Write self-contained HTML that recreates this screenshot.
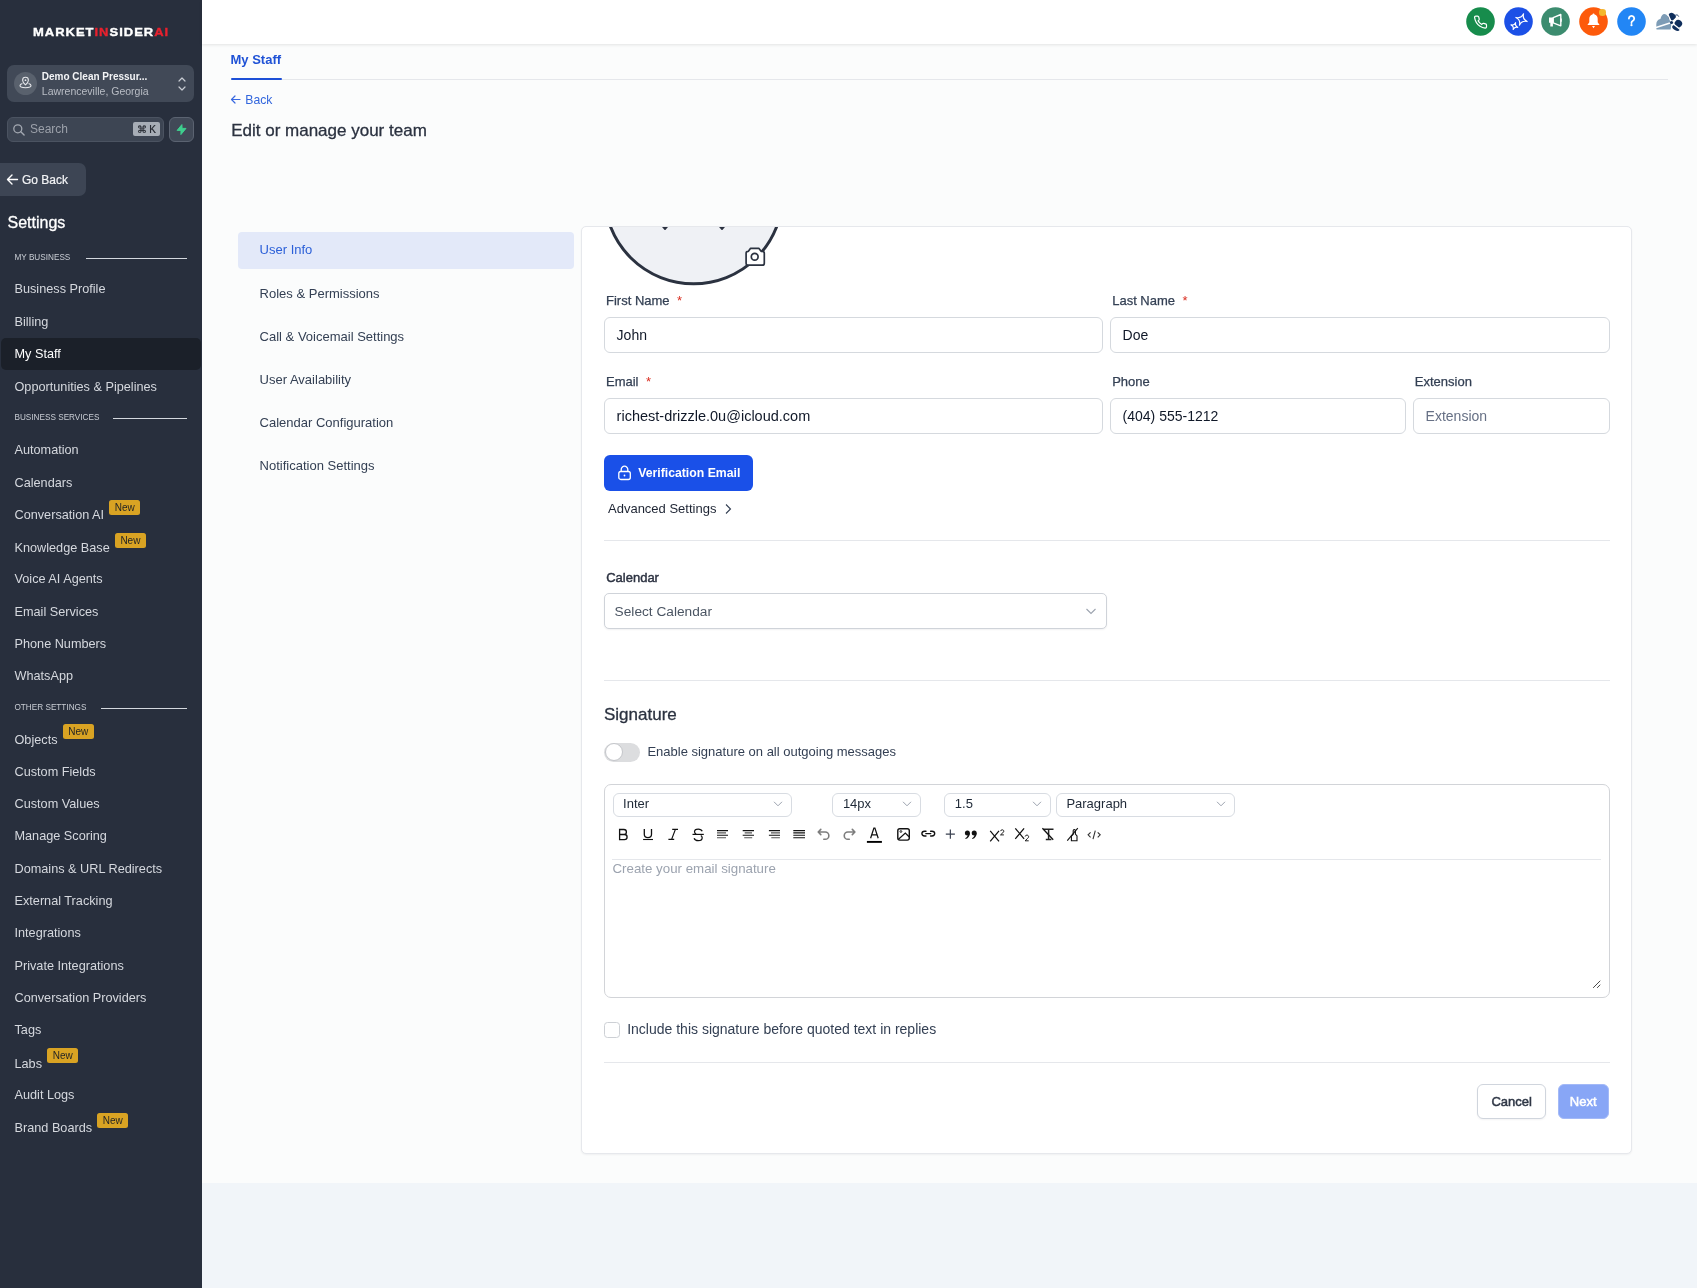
<!DOCTYPE html>
<html><head><meta charset="utf-8"><style>
html,body{will-change:transform;margin:0;padding:0;width:1697px;height:1288px;overflow:hidden;background:#f9fafb;font-family:"Liberation Sans",sans-serif}
.r{position:absolute}
.t{position:absolute;white-space:nowrap;font-family:"Liberation Sans",sans-serif}
.badge{display:inline-block;position:relative;top:-8.5px;margin-left:5px;width:31.3px;height:15px;line-height:15px;font-size:10px;text-align:center;background:#d9a323;color:#252525;border-radius:2.5px;vertical-align:baseline}
</style></head><body>
<div class="r" style="left:0px;top:0px;width:202px;height:1288px;background:#282f3d"></div>
<div class="t " style="left:33.2px;top:26.67px;font-size:10.9px;line-height:10.9px;color:#fff;font-weight:700;letter-spacing:0.85px;transform:scaleX(1.19);transform-origin:0 0;-webkit-text-stroke:0.35px;">MARKET<span style="color:#e8212e">IN</span>SIDER<span style="color:#e8212e">AI</span></div>
<div class="r" style="left:7px;top:65px;width:187px;height:37px;background:#414957;border-radius:7px"></div>
<div class="r" style="left:14px;top:72px;width:23px;height:23px;border-radius:50%;background:#59616d"></div>
<svg class="r" style="left:19px;top:76px;" width="13" height="13" viewBox="0 0 13 13"><path d="M6.5 1.3a2.9 2.9 0 0 0-2.9 2.9c0 2 2.9 4.6 2.9 4.6s2.9-2.6 2.9-4.6a2.9 2.9 0 0 0-2.9-2.9z" fill="none" stroke="#e5e7eb" stroke-width="1.1"/><circle cx="6.5" cy="4.2" r="0.9" fill="#e5e7eb"/><path d="M3.4 7.6C1.9 8.1 1 8.8 1 9.6c0 1.3 2.5 2.2 5.5 2.2s5.5-.9 5.5-2.2c0-.8-.9-1.5-2.4-2" fill="none" stroke="#e5e7eb" stroke-width="1.1"/></svg>
<div class="t " style="left:41.8px;top:71.73px;font-size:10px;line-height:10px;color:#f3f4f6;font-weight:700;">Demo Clean Pressur...</div>
<div class="t " style="left:41.8px;top:86.21px;font-size:10.5px;line-height:10.5px;color:#b9bdc5;">Lawrenceville, Georgia</div>
<svg class="r" style="left:176px;top:75px;" width="12" height="18" viewBox="0 0 12 18"><path d="M3 6l3-3 3 3M3 12l3 3 3-3" fill="none" stroke="#c8ccd3" stroke-width="1.2" stroke-linecap="round" stroke-linejoin="round"/></svg>
<div class="r" style="left:7px;top:117px;width:157px;height:25px;background:#3d4553;border:1px solid #4b5361;border-radius:6px;box-sizing:border-box"></div>
<svg class="r" style="left:12px;top:123px;" width="14" height="14" viewBox="0 0 14 14"><circle cx="5.8" cy="5.8" r="4" fill="none" stroke="#a3a8b1" stroke-width="1.3"/><path d="M8.8 8.8l3.3 3.3" stroke="#a3a8b1" stroke-width="1.4" stroke-linecap="round"/></svg>
<div class="t " style="left:30px;top:122.74px;font-size:12px;line-height:12px;color:#9ca1aa;">Search</div>
<div class="r" style="left:133px;top:122px;width:27px;height:14px;background:#a7adb6;border-radius:2px"></div>
<div class="t " style="left:136.5px;top:124.73px;font-size:10px;line-height:10px;color:#1e222a;-webkit-text-stroke:0.2px;">&#8984; K</div>
<div class="r" style="left:169px;top:117px;width:25px;height:25px;background:#414957;border:1px solid #5b6371;border-radius:6px;box-sizing:border-box"></div>
<svg class="r" style="left:175px;top:123px;" width="14" height="13" viewBox="0 0 14 13"><path d="M6.9 1.6L2.1 7.4H6L5.9 11.6 11 5.4H7.1z" fill="#3ecf8e" stroke="#3ecf8e" stroke-width="1" stroke-linejoin="round"/></svg>
<div class="r" style="left:0px;top:163px;width:86px;height:33px;background:#3d4554;border-radius:0 7px 7px 0"></div>
<svg class="r" style="left:6px;top:173px;" width="13" height="13" viewBox="0 0 13 13"><path d="M11.5 6.5H1.8M6 2L1.5 6.5 6 11" fill="none" stroke="#fff" stroke-width="1.4" stroke-linecap="round" stroke-linejoin="round"/></svg>
<div class="t " style="left:22px;top:173.64px;font-size:12px;line-height:12px;color:#f3f4f6;-webkit-text-stroke:0.2px;">Go Back</div>
<div class="t " style="left:7.5px;top:214.66px;font-size:16px;line-height:16px;color:#ffffff;-webkit-text-stroke:0.3px;">Settings</div>
<div class="t " style="left:14.5px;top:253.96px;font-size:8.2px;line-height:8.2px;color:#c9cdd4;">MY BUSINESS</div>
<div class="r" style="left:86px;top:257.7px;width:101px;height:1.5px;background:#d4d8de"></div>
<div class="t " style="left:14.5px;top:283.35px;font-size:12.7px;line-height:12.7px;color:#d5d8de;">Business Profile</div>
<div class="t " style="left:14.5px;top:315.85px;font-size:12.7px;line-height:12.7px;color:#d5d8de;">Billing</div>
<div class="r" style="left:1px;top:338px;width:200px;height:31.5px;background:#1b2029;border-radius:5px"></div>
<div class="t " style="left:14.5px;top:348.35px;font-size:12.7px;line-height:12.7px;color:#ffffff;">My Staff</div>
<div class="t " style="left:14.5px;top:380.85px;font-size:12.7px;line-height:12.7px;color:#d5d8de;">Opportunities & Pipelines</div>
<div class="t " style="left:14.5px;top:413.96px;font-size:8.2px;line-height:8.2px;color:#c9cdd4;">BUSINESS SERVICES</div>
<div class="r" style="left:113px;top:417.7px;width:74px;height:1.5px;background:#d4d8de"></div>
<div class="t " style="left:14.5px;top:444.45px;font-size:12.7px;line-height:12.7px;color:#d5d8de;">Automation</div>
<div class="t " style="left:14.5px;top:476.75px;font-size:12.7px;line-height:12.7px;color:#d5d8de;">Calendars</div>
<div class="t " style="left:14.5px;top:508.45px;font-size:12.7px;line-height:12.7px;color:#d5d8de;">Conversation AI<span class="badge">New</span></div>
<div class="t " style="left:14.5px;top:541.05px;font-size:12.7px;line-height:12.7px;color:#d5d8de;">Knowledge Base<span class="badge">New</span></div>
<div class="t " style="left:14.5px;top:573.35px;font-size:12.7px;line-height:12.7px;color:#d5d8de;">Voice AI Agents</div>
<div class="t " style="left:14.5px;top:605.65px;font-size:12.7px;line-height:12.7px;color:#d5d8de;">Email Services</div>
<div class="t " style="left:14.5px;top:638.05px;font-size:12.7px;line-height:12.7px;color:#d5d8de;">Phone Numbers</div>
<div class="t " style="left:14.5px;top:670.35px;font-size:12.7px;line-height:12.7px;color:#d5d8de;">WhatsApp</div>
<div class="t " style="left:14.5px;top:703.96px;font-size:8.2px;line-height:8.2px;color:#c9cdd4;">OTHER SETTINGS</div>
<div class="r" style="left:101px;top:707.7px;width:86px;height:1.5px;background:#d4d8de"></div>
<div class="t " style="left:14.5px;top:732.85px;font-size:12.7px;line-height:12.7px;color:#d5d8de;">Objects<span class="badge">New</span></div>
<div class="t " style="left:14.5px;top:765.65px;font-size:12.7px;line-height:12.7px;color:#d5d8de;">Custom Fields</div>
<div class="t " style="left:14.5px;top:797.95px;font-size:12.7px;line-height:12.7px;color:#d5d8de;">Custom Values</div>
<div class="t " style="left:14.5px;top:830.35px;font-size:12.7px;line-height:12.7px;color:#d5d8de;">Manage Scoring</div>
<div class="t " style="left:14.5px;top:862.65px;font-size:12.7px;line-height:12.7px;color:#d5d8de;">Domains & URL Redirects</div>
<div class="t " style="left:14.5px;top:895.05px;font-size:12.7px;line-height:12.7px;color:#d5d8de;">External Tracking</div>
<div class="t " style="left:14.5px;top:927.35px;font-size:12.7px;line-height:12.7px;color:#d5d8de;">Integrations</div>
<div class="t " style="left:14.5px;top:959.75px;font-size:12.7px;line-height:12.7px;color:#d5d8de;">Private Integrations</div>
<div class="t " style="left:14.5px;top:992.05px;font-size:12.7px;line-height:12.7px;color:#d5d8de;">Conversation Providers</div>
<div class="t " style="left:14.5px;top:1024.45px;font-size:12.7px;line-height:12.7px;color:#d5d8de;">Tags</div>
<div class="t " style="left:14.5px;top:1056.75px;font-size:12.7px;line-height:12.7px;color:#d5d8de;">Labs<span class="badge">New</span></div>
<div class="t " style="left:14.5px;top:1089.15px;font-size:12.7px;line-height:12.7px;color:#d5d8de;">Audit Logs</div>
<div class="t " style="left:14.5px;top:1121.45px;font-size:12.7px;line-height:12.7px;color:#d5d8de;">Brand Boards<span class="badge">New</span></div>
<div class="r" style="left:202px;top:0px;width:1495px;height:1183px;background:#fbfcfc"></div>
<div class="r" style="left:202px;top:1183px;width:1495px;height:105px;background:#f1f5f9"></div>
<div class="r" style="left:202px;top:0px;width:1495px;height:44px;background:#fff;box-shadow:0 1px 3px rgba(0,0,0,0.10)"></div>
<svg class="r" style="left:1466.0px;top:7px;" width="29" height="29" viewBox="0 0 29 29"><circle cx="14.5" cy="14.5" r="14.3" fill="#178c4c"/><path transform="translate(7.3,7.9) scale(0.6)" d="M22 16.92v3a2 2 0 0 1-2.18 2 19.79 19.79 0 0 1-8.63-3.07 19.5 19.5 0 0 1-6-6 19.79 19.79 0 0 1-3.07-8.67A2 2 0 0 1 4.11 2h3a2 2 0 0 1 2 1.72 12.84 12.84 0 0 0 .7 2.81 2 2 0 0 1-.45 2.11L8.09 9.91a16 16 0 0 0 6 6l1.27-1.27a2 2 0 0 1 2.11-.45 12.84 12.84 0 0 0 2.81.7A2 2 0 0 1 22 16.92z" fill="none" stroke="#fff" stroke-width="2"/></svg>
<svg class="r" style="left:1503.8px;top:7px;" width="29" height="29" viewBox="0 0 29 29"><circle cx="14.5" cy="14.5" r="14.3" fill="#1c50e6"/><path d="M19.55 6.86 Q18.19 12.18 23.14 14.55 Q17.82 13.19 15.45 18.14 Q16.81 12.82 11.86 10.45 Q17.18 11.81 19.55 6.86Z" fill="none" stroke="#fff" stroke-width="1.15" stroke-linejoin="round"/><path d="M11.63 15.72 Q10.82 18.91 13.78 20.33 Q10.59 19.52 9.17 22.48 Q9.98 19.29 7.02 17.87 Q10.21 18.68 11.63 15.72Z" fill="none" stroke="#fff" stroke-width="1.15" stroke-linejoin="round"/></svg>
<svg class="r" style="left:1541.3px;top:7px;" width="29" height="29" viewBox="0 0 29 29"><circle cx="14.5" cy="14.5" r="14.3" fill="#3c8c6f"/><path d="M8 10.6h4.2v5.2H8z M9.3 15.8h2.6v3.6H9.3z" fill="#fff"/><path d="M12.2 10.6l7.6-3.1v11.3l-7.6-3z" fill="none" stroke="#fff" stroke-width="1.4" stroke-linejoin="round"/><path d="M20.2 11.6v3.2" stroke="#fff" stroke-width="1.2"/></svg>
<svg class="r" style="left:1579.3px;top:7px;" width="29" height="29" viewBox="0 0 29 29"><circle cx="14.5" cy="14.5" r="14.3" fill="#fd5a0b"/><path d="M14.5 6.6c-.6 0-1 .4-1 .9-2 .5-3.2 2.2-3.2 4.3v3.4l-1.9 2.7h12.2l-1.9-2.7v-3.4c0-2.1-1.2-3.8-3.2-4.3 0-.5-.4-.9-1-.9z" fill="#fff"/><path d="M13 19h3l-1.5 2.2z" fill="#fff"/></svg>
<div class="r" style="left:1599px;top:9.1px;width:6.6px;height:6.6px;border-radius:50%;background:#f4b72c"></div>
<svg class="r" style="left:1617.1000000000001px;top:7px;" width="29" height="29" viewBox="0 0 29 29"><circle cx="14.5" cy="14.5" r="14.3" fill="#2286f5"/><path d="M11.9 11.5a2.65 2.65 0 1 1 4 2.3c-.8.5-1.4.9-1.4 1.9v.4" fill="none" stroke="#fff" stroke-width="1.8" stroke-linecap="round"/><circle cx="14.5" cy="18.2" r="1.1" fill="#fff"/></svg>
<svg class="r" style="left:1650px;top:5px;" width="40" height="30" viewBox="0 0 40 30"><path d="M6.3 24.3V19.2C6.3 16.2 8 14.2 10.4 13.9 11.3 11.1 12.7 9.1 14.4 9.1 16.6 9.1 19 12.4 21.5 17.5L20.7 24.6H7.2z" fill="#7d9cb6"/><g fill="#0f2e5c"><ellipse cx="21.9" cy="11.6" rx="4" ry="3.5" transform="rotate(35 21.9 11.6)"/><ellipse cx="28.4" cy="18.6" rx="3.8" ry="3.6" transform="rotate(40 28.4 18.6)"/><ellipse cx="26" cy="23" rx="4.1" ry="2.4" transform="rotate(30 26 23)"/></g><path d="M25.3 10.2c1.6-.6 2.9-.2 3.4 1.4" fill="none" stroke="#0f2e5c" stroke-width="0.9"/><path d="M21.5 17.5L16.6 6.5M21.5 17.5L4.5 23M21.5 17.5L28 11.5M21.5 17.5L31.5 25.5" stroke="#fff" stroke-width="1.4"/><circle cx="21.5" cy="17.5" r="1.6" fill="#0f2e5c"/></svg>
<div class="t " style="left:230.5px;top:53.20px;font-size:13px;line-height:13px;color:#1f52d6;font-weight:700;">My Staff</div>
<div class="r" style="left:231px;top:78.5px;width:1437px;height:1.0px;background:#e5e7eb"></div>
<div class="r" style="left:231px;top:77.5px;width:51px;height:2.5px;background:#1d4fd7;border-radius:1px"></div>
<svg class="r" style="left:230px;top:94px;" width="11" height="11" viewBox="0 0 11 11"><path d="M10 5.5H1.5M5 2L1.5 5.5 5 9" fill="none" stroke="#3868e0" stroke-width="1.2" stroke-linecap="round" stroke-linejoin="round"/></svg>
<div class="t " style="left:245.3px;top:93.57px;font-size:12.2px;line-height:12.2px;color:#3266dd;">Back</div>
<div class="t " style="left:231.2px;top:122.01px;font-size:17px;line-height:17px;color:#2b3240;-webkit-text-stroke:0.3px;">Edit or manage your team</div>
<div class="r" style="left:238px;top:232.3px;width:336px;height:36.39999999999998px;background:#e3e9f9;border-radius:4px"></div>
<div class="t " style="left:259.6px;top:243.30px;font-size:13px;line-height:13px;color:#2c60d8;">User Info</div>
<div class="t " style="left:259.6px;top:287.20px;font-size:13px;line-height:13px;color:#344054;">Roles &amp; Permissions</div>
<div class="t " style="left:259.6px;top:330.00px;font-size:13px;line-height:13px;color:#344054;">Call &amp; Voicemail Settings</div>
<div class="t " style="left:259.6px;top:373.00px;font-size:13px;line-height:13px;color:#344054;">User Availability</div>
<div class="t " style="left:259.6px;top:416.00px;font-size:13px;line-height:13px;color:#344054;">Calendar Configuration</div>
<div class="t " style="left:259.6px;top:459.00px;font-size:13px;line-height:13px;color:#344054;">Notification Settings</div>
<div class="r" style="left:581px;top:226px;width:1051px;height:928px;background:#fff;border:1px solid #e6e8ec;border-radius:5px;box-sizing:border-box;overflow:hidden;box-shadow:0 1px 2px rgba(16,24,40,0.05)">
<svg class="r" style="left:0;top:0" width="300" height="70" viewBox="0 0 300 70"><circle cx="111.6" cy="-32.2" r="89" fill="#eff1f5" stroke="#2b3240" stroke-width="3"/></svg>
<svg class="r" style="left:78.5px;top:-1px;" width="8" height="6" viewBox="0 0 8 6"><path d="M0.2 0L7.8 0L4.6 3.8Q4 4.4 3.4 3.8z" fill="#2b3240"/></svg>
<svg class="r" style="left:136px;top:-1px;" width="8" height="6" viewBox="0 0 8 6"><path d="M0.2 0L7.8 0L4.6 3.8Q4 4.4 3.4 3.8z" fill="#2b3240"/></svg>
</div>
<svg class="r" style="left:743px;top:245px;" width="24" height="23" viewBox="0 0 24 23"><path d="M5.4 6.3L7.6 3.3h8.2l2.3 3h1.2c1.2 0 2 .8 2 2v9.9c0 1.2-.8 2-2 2H5.1c-1.2 0-2-.8-2-2V8.3c0-1.2.8-2 2-2z" fill="#fff" stroke="#2b3240" stroke-width="1.7" stroke-linejoin="round"/><circle cx="11.7" cy="11.8" r="3.4" fill="none" stroke="#2b3240" stroke-width="1.7"/></svg>
<div class="t " style="left:606px;top:293.50px;font-size:13px;line-height:13px;color:#344054;-webkit-text-stroke:0.25px #344054;">First Name<span style="color:#d92d20;margin-left:7.5px;position:relative;top:0.3px;-webkit-text-stroke:0">*</span></div>
<div class="t " style="left:1112.2px;top:293.50px;font-size:13px;line-height:13px;color:#344054;-webkit-text-stroke:0.25px #344054;">Last Name<span style="color:#d92d20;margin-left:7.5px;position:relative;top:0.3px;-webkit-text-stroke:0">*</span></div>
<div class="r" style="left:604px;top:317px;width:499px;height:36px;background:#fff;border:1px solid #d5d9de;border-radius:6px;box-sizing:border-box"></div>
<div class="t " style="left:616.6px;top:328.15px;font-size:14px;line-height:14px;color:#101828;">John</div>
<div class="r" style="left:1110px;top:317px;width:500px;height:36px;background:#fff;border:1px solid #d5d9de;border-radius:6px;box-sizing:border-box"></div>
<div class="t " style="left:1122.6px;top:328.15px;font-size:14px;line-height:14px;color:#101828;">Doe</div>
<div class="t " style="left:606px;top:374.70px;font-size:13px;line-height:13px;color:#344054;-webkit-text-stroke:0.25px #344054;">Email<span style="color:#d92d20;margin-left:7.5px;position:relative;top:0.3px;-webkit-text-stroke:0">*</span></div>
<div class="t " style="left:1112.2px;top:374.70px;font-size:13px;line-height:13px;color:#344054;-webkit-text-stroke:0.25px #344054;">Phone</div>
<div class="t " style="left:1414.8px;top:374.70px;font-size:13px;line-height:13px;color:#344054;-webkit-text-stroke:0.25px #344054;">Extension</div>
<div class="r" style="left:604px;top:398px;width:499px;height:36px;background:#fff;border:1px solid #d5d9de;border-radius:6px;box-sizing:border-box"></div>
<div class="t " style="left:616.6px;top:408.73px;font-size:14.5px;line-height:14.5px;color:#101828;">richest-drizzle.0u@icloud.com</div>
<div class="r" style="left:1110px;top:398px;width:296px;height:36px;background:#fff;border:1px solid #d5d9de;border-radius:6px;box-sizing:border-box"></div>
<div class="t " style="left:1122.6px;top:409.15px;font-size:14px;line-height:14px;color:#101828;">(404) 555-1212</div>
<div class="r" style="left:1413px;top:398px;width:197px;height:36px;background:#fff;border:1px solid #d5d9de;border-radius:6px;box-sizing:border-box"></div>
<div class="t " style="left:1425.6px;top:409.15px;font-size:14px;line-height:14px;color:#667085;">Extension</div>
<div class="r" style="left:604px;top:455px;width:148.70000000000005px;height:35.69999999999999px;background:#1a50e8;border-radius:6px"></div>
<svg class="r" style="left:617px;top:465px;" width="16" height="16" viewBox="0 0 16 16"><rect x="1.8" y="6.5" width="11.5" height="8" rx="2" fill="none" stroke="#fff" stroke-width="1.3"/><path d="M4.2 6.5V4.5a3.3 3.3 0 0 1 6.6 0v2" fill="none" stroke="#fff" stroke-width="1.3"/><circle cx="7.5" cy="10.5" r="0.9" fill="#fff"/></svg>
<div class="t " style="left:638.2px;top:467.13px;font-size:12.25px;line-height:12.25px;color:#ffffff;font-weight:700;">Verification Email</div>
<div class="t " style="left:608px;top:501.80px;font-size:13px;line-height:13px;color:#1d2433;">Advanced Settings</div>
<svg class="r" style="left:723px;top:503px;" width="10" height="12" viewBox="0 0 10 12"><path d="M3 1.5l4.5 4.5L3 10.5" fill="none" stroke="#344054" stroke-width="1.1"/></svg>
<div class="r" style="left:604px;top:539.5px;width:1006px;height:1.0px;background:#e5e7eb"></div>
<div class="t " style="left:606.2px;top:570.80px;font-size:13px;line-height:13px;color:#2d3342;-webkit-text-stroke:0.45px;">Calendar</div>
<div class="r" style="left:604px;top:593px;width:503px;height:36px;background:#fff;border:1px solid #cfd3d9;border-radius:5px;box-sizing:border-box;box-shadow:0 1px 2px rgba(16,24,40,0.06)"></div>
<div class="t " style="left:614.6px;top:605.00px;font-size:13.7px;line-height:13.7px;color:#4b5563;">Select Calendar</div>
<svg class="r" style="left:1085px;top:606px;" width="12" height="10" viewBox="0 0 12 10"><path d="M1.5 3l4.5 4.5L10.5 3" fill="none" stroke="#9ca3af" stroke-width="1.1"/></svg>
<div class="r" style="left:604px;top:680px;width:1006px;height:1px;background:#e5e7eb"></div>
<div class="t " style="left:604px;top:706.41px;font-size:17px;line-height:17px;color:#2b3240;-webkit-text-stroke:0.3px;">Signature</div>
<div class="r" style="left:604px;top:743px;width:36px;height:19px;background:#dcdddf;border-radius:10px"></div>
<div class="r" style="left:604.5px;top:743.3px;width:18px;height:18px;border-radius:50%;background:#fff;border:1px solid #c4c6ca;box-sizing:border-box"></div>
<div class="t " style="left:647.4px;top:745.20px;font-size:13px;line-height:13px;color:#344054;">Enable signature on all outgoing messages</div>
<div class="r" style="left:604px;top:784px;width:1006px;height:214px;background:#fff;border:1px solid #d2d4d8;border-radius:7px;box-sizing:border-box"></div>
<div class="r" style="left:612.6px;top:792.6px;width:179.0px;height:24.0px;background:#fff;border:1px solid #d8dce2;border-radius:6px;box-sizing:border-box"></div>
<div class="t " style="left:623.1px;top:797.30px;font-size:13px;line-height:13px;color:#1f2937;">Inter</div>
<svg class="r" style="left:772.6px;top:800px;" width="10" height="8" viewBox="0 0 10 8"><path d="M1 1.8l4 4 4-4" fill="none" stroke="#9ca3af" stroke-width="1"/></svg>
<div class="r" style="left:832.4px;top:792.6px;width:88.5px;height:24.0px;background:#fff;border:1px solid #d8dce2;border-radius:6px;box-sizing:border-box"></div>
<div class="t " style="left:842.9px;top:797.30px;font-size:13px;line-height:13px;color:#1f2937;">14px</div>
<svg class="r" style="left:901.9px;top:800px;" width="10" height="8" viewBox="0 0 10 8"><path d="M1 1.8l4 4 4-4" fill="none" stroke="#9ca3af" stroke-width="1"/></svg>
<div class="r" style="left:944.3px;top:792.6px;width:106.90000000000009px;height:24.0px;background:#fff;border:1px solid #d8dce2;border-radius:6px;box-sizing:border-box"></div>
<div class="t " style="left:954.8px;top:797.30px;font-size:13px;line-height:13px;color:#1f2937;">1.5</div>
<svg class="r" style="left:1032.2px;top:800px;" width="10" height="8" viewBox="0 0 10 8"><path d="M1 1.8l4 4 4-4" fill="none" stroke="#9ca3af" stroke-width="1"/></svg>
<div class="r" style="left:1055.9px;top:792.6px;width:178.89999999999986px;height:24.0px;background:#fff;border:1px solid #d8dce2;border-radius:6px;box-sizing:border-box"></div>
<div class="t " style="left:1066.4px;top:797.30px;font-size:13px;line-height:13px;color:#1f2937;">Paragraph</div>
<svg class="r" style="left:1215.8px;top:800px;" width="10" height="8" viewBox="0 0 10 8"><path d="M1 1.8l4 4 4-4" fill="none" stroke="#9ca3af" stroke-width="1"/></svg>
<div class="r" style="left:612px;top:858.5px;width:989px;height:1.0px;background:#e5e7eb"></div>
<div class="t " style="left:612.5px;top:862.24px;font-size:13.3px;line-height:13.3px;color:#9ca3af;">Create your email signature</div>
<svg class="r" style="left:1590px;top:978px;" width="12" height="12" viewBox="0 0 12 12"><path d="M3.4 9.6l6.6-6.6M7.4 9.6l2.6-2.6" stroke="#4a4a4a" stroke-width="1" stroke-linecap="round"/></svg>
<div class="r" style="left:604px;top:1022px;width:16px;height:16px;background:#fff;border:1px solid #cdd0d5;border-radius:3.5px;box-sizing:border-box"></div>
<div class="t " style="left:627.2px;top:1021.65px;font-size:14px;line-height:14px;color:#344054;">Include this signature before quoted text in replies</div>
<div class="r" style="left:604px;top:1061.5px;width:1006px;height:1.0px;background:#e5e7eb"></div>
<div class="r" style="left:1476.5px;top:1084.3px;width:69.29999999999995px;height:35.0px;background:#fff;border:1px solid #d0d5dd;border-radius:6px;box-sizing:border-box;box-shadow:0 1px 2px rgba(16,24,40,0.05)"></div>
<div class="t " style="left:1491.4px;top:1095.10px;font-size:13px;line-height:13px;color:#2f3746;-webkit-text-stroke:0.5px;">Cancel</div>
<div class="r" style="left:1557.5px;top:1084.3px;width:51.5px;height:34.799999999999955px;background:#88a6f6;border-radius:6px;border:1px solid #a3b9f7;box-sizing:border-box"></div>
<div class="t " style="left:1569.8px;top:1095.10px;font-size:13px;line-height:13px;color:#ffffff;-webkit-text-stroke:0.5px;">Next</div>
<svg class="r" style="left:612px;top:822px" width="495" height="26" viewBox="0 0 495 26" fill="none" stroke="#111" stroke-width="1.2">
<!-- B -->
<path d="M7.6 7.5h4.3c1.5 0 2.5.9 2.5 2.5s-1 2.5-2.5 2.5H7.6zM7.6 12.5h4.8c1.6 0 2.7 1 2.7 2.6s-1.1 2.6-2.7 2.6H7.6z" stroke-width="1.3"/>
<!-- U -->
<path d="M32.3 7v5.3c0 2.1 1.4 3.4 3.6 3.4s3.6-1.3 3.6-3.4V7" stroke-width="1.3"/>
<path d="M31.1 17.5h9.9" stroke-width="1.1"/>
<!-- I -->
<path d="M60.2 7.4h5.8M56.4 17.4h5.8M63.4 7.4l-3.8 10" stroke-width="1.2"/>
<!-- S -->
<path d="M90.2 9.3c-.5-1.4-1.9-2.3-4-2.3-2.2 0-3.7 1.1-3.7 2.8 0 1.1.6 1.9 1.7 2.4M88.8 13.5c.9.5 1.4 1.2 1.4 2.3 0 1.8-1.6 2.9-3.9 2.9-2.2 0-3.7-.9-4.2-2.4" stroke-width="1.25"/>
<path d="M80.5 12.4h11.3" stroke-width="1.2"/>
<!-- align left -->
<g stroke-width="1.1">
<path d="M105 8.6h11M105 13.2h11"/>
<path d="M105 10.9h9M105 15.8h9" stroke="#555"/>
<!-- align center -->
<path d="M130.7 8.6h11.3M130.7 13.2h11.3"/>
<path d="M132.7 10.9h7.3M132.2 15.8h8" stroke="#555"/>
<!-- align right -->
<path d="M156.9 8.6h11.1M156.9 13.2h11.1"/>
<path d="M159 10.9h9M159.3 15.8h8.6" stroke="#555"/>
<!-- justify -->
<path d="M181.3 8.6h11.7M181.3 10.9h11.7M181.3 13.2h11.7M181.3 15.8h11.7"/>
</g>
<!-- undo -->
<path d="M208.8 7.4l-2.6 2.6 2.6 2.6M206.6 10h6.6a3.6 3.6 0 0 1 0 7.3h-1.4" stroke="#7d7d7d" stroke-width="1.6" stroke-linejoin="round" stroke-linecap="round"/>
<!-- redo -->
<path d="M240.3 7.4l2.6 2.6-2.6 2.6M242.5 10h-6.6a3.6 3.6 0 0 0 0 7.3h1.4" stroke="#7d7d7d" stroke-width="1.6" stroke-linejoin="round" stroke-linecap="round"/>
<!-- A -->
<path d="M258.6 16.2l3.3-10.2h1l3.3 10.2M259.8 12.8h4.9" stroke-width="1.25"/>
<path d="M254.9 19.9h15" stroke="#000" stroke-width="1.9"/>
<!-- image -->
<rect x="285.8" y="6.8" width="11.5" height="11.3" rx="2" stroke-width="1.4"/>
<path d="M286.5 17.3l6.8-6.3 4 4" stroke-width="1.2"/>
<circle cx="288.9" cy="9.5" r="0.9" stroke-width="0.9"/>
<!-- link -->
<path d="M314 9.2h-1.4c-1.6 0-2.7 1.1-2.7 2.4s1.1 2.4 2.7 2.4h1.4M318.6 9.2h1.4c1.6 0 2.7 1.1 2.7 2.4s-1.1 2.4-2.7 2.4h-1.4M313.8 11.6h5" stroke-width="1.35" stroke-linecap="round"/>
<!-- plus -->
<path d="M333.8 12.1h9.1M338.35 7.5v9.2" stroke="#3a4150" stroke-width="1.2"/>
<!-- quote -->
<g fill="#111" stroke="none">
<circle cx="355.4" cy="10.9" r="2.5"/><path d="M357.8 11c0 3.2-1.4 5-4.1 6.1l-.5-.8c1.7-.9 2.6-2.2 2.6-4z"/>
<circle cx="362.2" cy="10.9" r="2.5"/><path d="M364.6 11c0 3.2-1.4 5-4.1 6.1l-.5-.8c1.7-.9 2.6-2.2 2.6-4z"/>
</g>
<!-- X^2 -->
<path d="M378.2 8.9l8.8 10.5M387 8.9l-8.8 10.5" stroke-width="1.25"/>
<path d="M388.6 9.1c.1-.8.8-1.3 1.6-1.3.9 0 1.6.6 1.6 1.4 0 .6-.3 1-1 1.6l-2.3 2.1h3.4" stroke-width="0.95"/>
<!-- X_2 -->
<path d="M403.3 6.3l8.8 10.5M412.1 6.3l-8.8 10.5" stroke-width="1.25"/>
<path d="M413.2 14.5c.1-.9.8-1.4 1.7-1.4 1 0 1.7.7 1.7 1.6 0 .7-.3 1.1-1.1 1.8l-2.4 2.3h3.6" stroke-width="0.95"/>
<!-- clear format -->
<path d="M431.6 7.2h9.9M436.6 7.2v10.3M433.8 17.6h5.6" stroke="#222" stroke-width="1.5"/>
<path d="M430.4 6.3l10.8 11.5" stroke-width="1.3"/>
<!-- strike icon 2 -->
<path d="M455.3 18.6l10.5-12.5" stroke-width="1.1"/>
<path d="M459.4 18.7v-4.5l1.8-2v-3.5c0-.7.5-1.2 1.1-1.2s1.1.5 1.1 1.2v3.4l1.6 1.8v4.8z" stroke-width="1.1"/>
<!-- code -->
<path d="M478.6 10.3l-2.5 2.5 2.5 2.5M485.7 10.3l2.5 2.5-2.5 2.5M483.3 8.6l-2.3 8.6" stroke="#333" stroke-width="1.1"/>
</svg>
</body></html>
